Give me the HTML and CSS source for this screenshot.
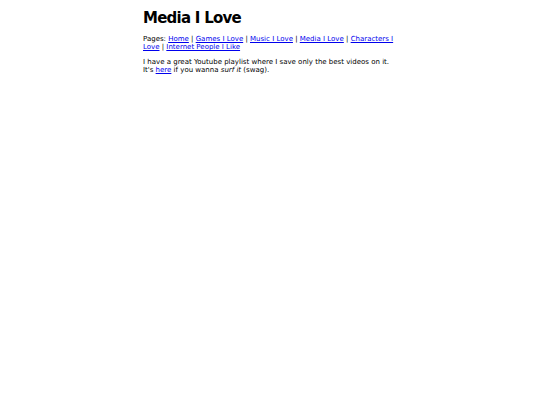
FILE: index.html
```html
<!DOCTYPE html>
<html>
<head>
<meta charset="utf-8">
<title>Media I Love</title>
<link rel="stylesheet" href="styles.css">
</head>
<body>
<main class="page">
<h1 class="title">Media I Love</h1>
<p class="nav">Pages: <a href="#">Home</a> | <a href="#">Games I Love</a> | <a href="#">Music I Love</a> | <a href="#">Media I Love</a> | <a href="#">Characters I Love</a> | <a href="#">Internet People I Like</a></p>
<p class="text">I have a great Youtube playlist where I save only the best videos on it. It's <a href="#">here</a> if you wanna <em>surf it</em> (swag).</p>
</main>
</body>
</html>
```

FILE: styles.css
```css
html, body {
  margin: 0;
  padding: 0;
  background: #ffffff;
}
body {
  font-family: "DejaVu Sans", Verdana, sans-serif;
  font-size: 7px;
  line-height: 8.3px;
  color: #000000;
}
.page {
  width: 254px;
  margin: 0 auto;
  padding-top: 10px;
}
.title {
  font-size: 15px;
  line-height: 17px;
  letter-spacing: -0.75px;
  font-weight: bold;
  margin: 0 0 8px 0;
}
.nav, .text {
  margin: 6.5px 0;
}
a {
  color: #0000ee;
}
```
